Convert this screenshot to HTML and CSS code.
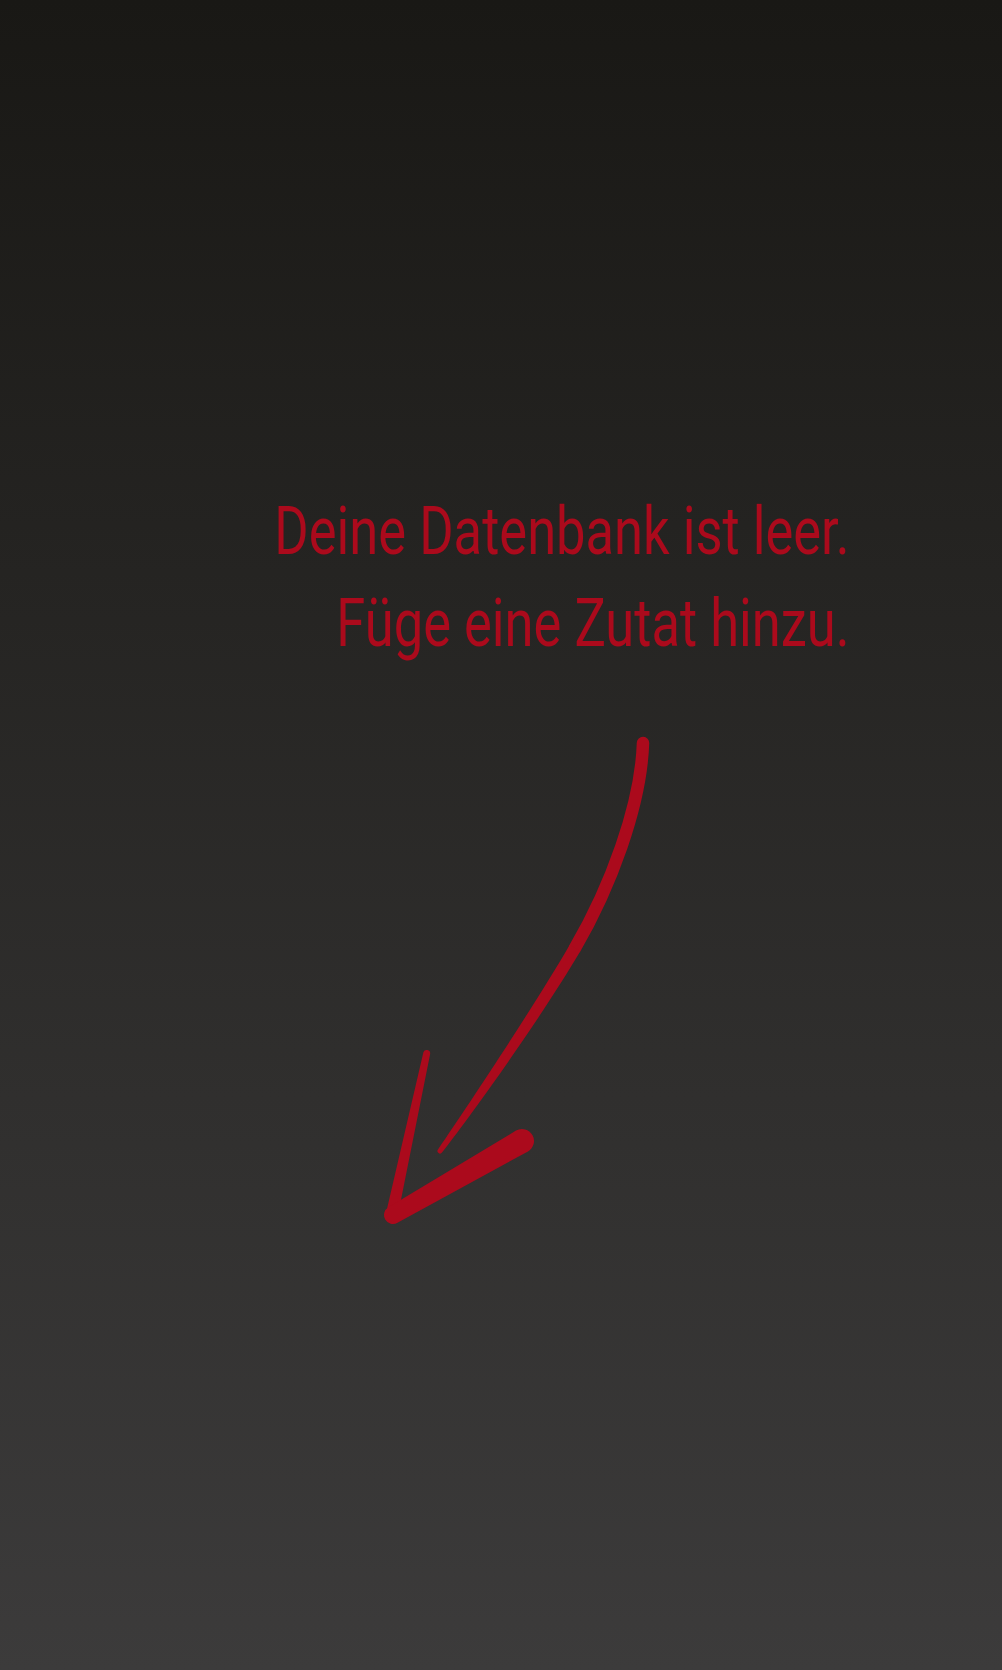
FILE: index.html
```html
<!DOCTYPE html>
<html lang="de">
<head>
<meta charset="utf-8">
<title>Zutaten</title>
<link rel="stylesheet" href="styles.css">
</head>
<body>
<main class="empty">
  <p class="msg">Deine Datenbank ist leer.<br>Füge eine Zutat hinzu.</p>
  <svg class="arrow" viewBox="0 0 300 520" width="300" height="520" aria-hidden="true">
    <path class="line" d="M273,25 C271,88 240,170 205,230"/>
    <path class="ink" d="M199.6,226.9 C164.8,287 101.4,382.4 68,431.5 A2.5,2.5 0 0 0 72,434.5 C108.6,387.7 175.2,293 210.4,233.1 Z"/>
    <path class="ink" d="M53.4,334.3 A3.5,3.5 0 0 1 60.2,335.7 L27.9,497.3 A6,6 0 0 1 16.1,494.7 Z"/>
    <path class="ink" d="M18.5,489.2 L146,412.6 A12,12 0 0 1 158,433.4 L27.5,504.8 A9,9 0 0 1 18.5,489.2 Z"/>
  </svg>
</main>
</body>
</html>
```
FILE: styles.css
```css
html, body {
  margin: 0;
  padding: 0;
}
body {
  min-height: 1670px;
  background: linear-gradient(to bottom, #191815 0%, #3c3b3b 100%);
  font-family: Roboto, "Noto Sans", sans-serif;
}
.empty {
  display: flex;
  flex-direction: column;
  padding-top: 486px;
}
.msg {
  align-self: flex-end;
  margin: 0 152px 0 0;
  text-align: right;
  color: #ab0a1c;
  font-size: 66px;
  font-weight: 400;
  line-height: 92px;
  transform: scaleX(0.795);
  transform-origin: right center;
}
.arrow {
  display: block;
  margin: 48px 0 0 370px;
}
.ink {
  fill: #ab0a1c;
}
.line {
  fill: none;
  stroke: #ab0a1c;
  stroke-width: 12.5;
  stroke-linecap: round;
}
```
